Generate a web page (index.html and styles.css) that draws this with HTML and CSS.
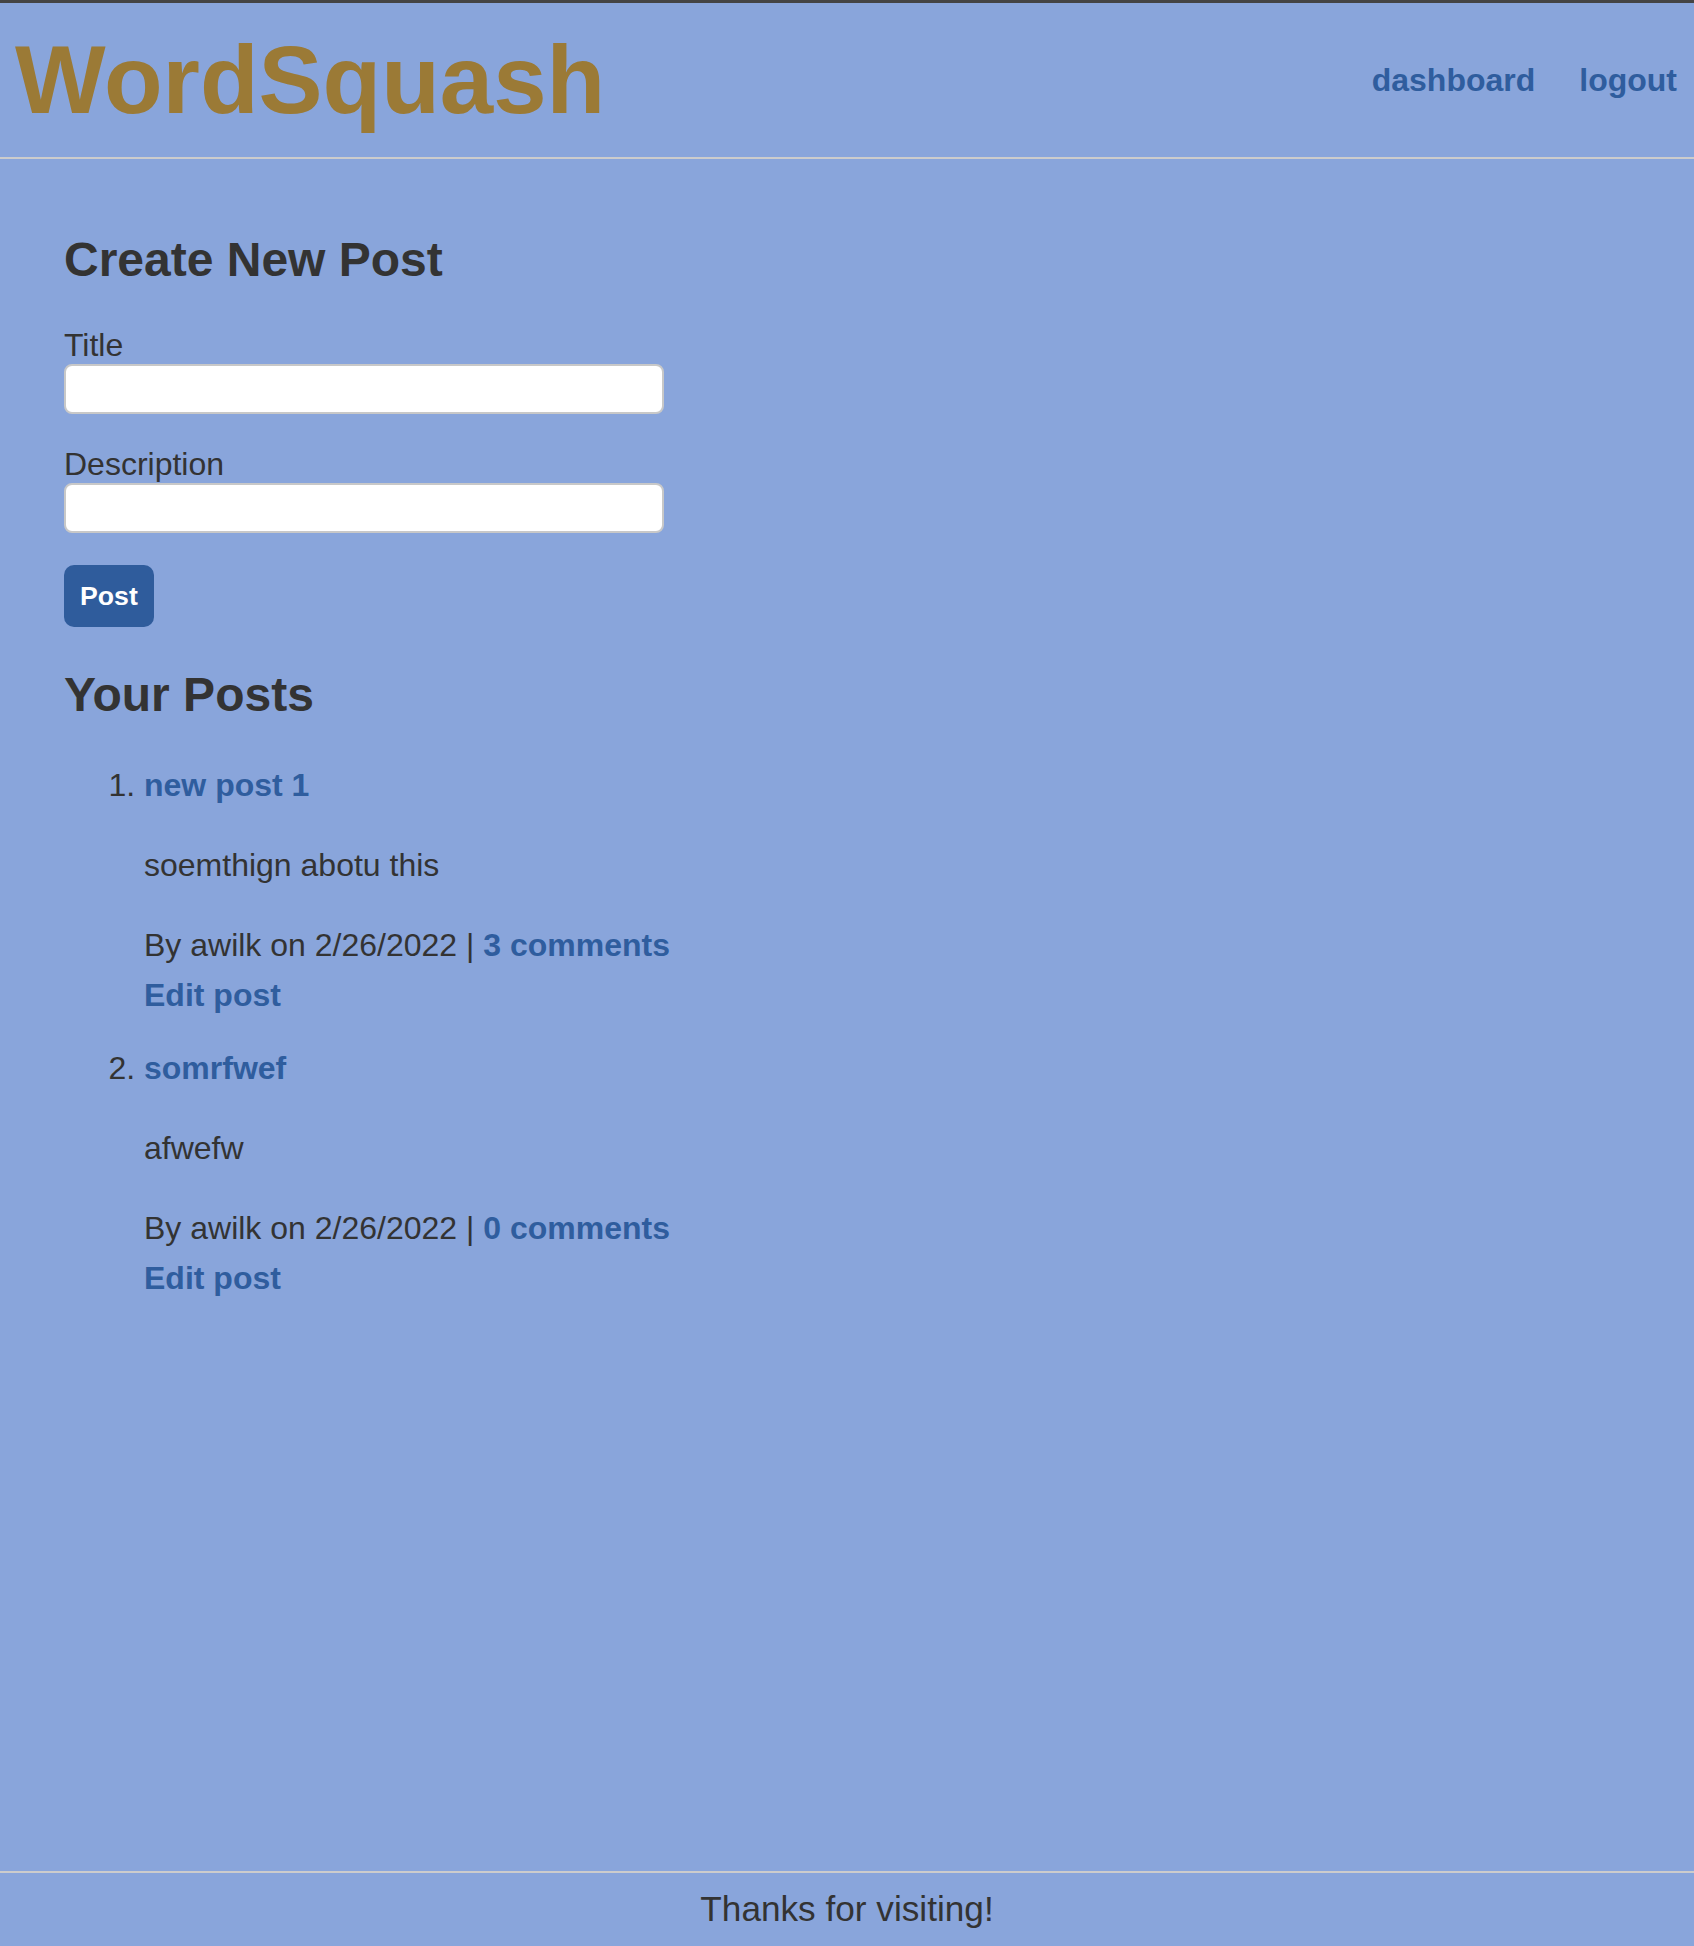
FILE: index.html
```html
<!DOCTYPE html>
<html lang="en">
<head>
<meta charset="utf-8">
<title>WordSquash</title>
<link rel="stylesheet" href="styles.css">
</head>
<body>
<header class="site-header">
  <h1 class="brand">WordSquash</h1>
  <nav class="nav">
    <a class="nav-link" href="#">dashboard</a>
    <a class="nav-link" href="#">logout</a>
  </nav>
</header>
<main class="main">
  <h2 class="section-title">Create New Post</h2>
  <form class="post-form">
    <div class="field">
      <label class="field-label" for="title">Title</label>
      <input class="field-input" id="title" type="text">
    </div>
    <div class="field">
      <label class="field-label" for="desc">Description</label>
      <input class="field-input" id="desc" type="text">
    </div>
    <div class="form-actions">
      <button class="btn" type="button">Post</button>
    </div>
  </form>
  <h2 class="section-title posts-title">Your Posts</h2>
  <ol class="posts">
    <li class="post">
      <a class="post-link" href="#">new post 1</a>
      <p class="post-desc">soemthign abotu this</p>
      <p class="post-meta">By awilk on 2/26/2022 | <a class="post-link" href="#">3 comments</a></p>
      <a class="post-link edit-link" href="#">Edit post</a>
    </li>
    <li class="post">
      <a class="post-link" href="#">somrfwef</a>
      <p class="post-desc">afwefw</p>
      <p class="post-meta">By awilk on 2/26/2022 | <a class="post-link" href="#">0 comments</a></p>
      <a class="post-link edit-link" href="#">Edit post</a>
    </li>
  </ol>
</main>
<footer class="site-footer">Thanks for visiting!</footer>
</body>
</html>
```

FILE: styles.css
```css
* {
  box-sizing: border-box;
}

html, body {
  margin: 0;
  padding: 0;
}

body {
  min-height: 100vh;
  display: flex;
  flex-direction: column;
  background: #89a5db;
  color: #333333;
  font-family: "Liberation Sans", Arial, Helvetica, sans-serif;
  font-size: 32px;
  line-height: 48px;
  border-top: 3px solid #444444;
}

a {
  color: #2f5d9e;
  font-weight: bold;
  text-decoration: none;
}

.site-header {
  height: 156px;
  display: flex;
  justify-content: space-between;
  align-items: center;
  padding: 0 17px 0 15px;
  border-bottom: 2px solid #cccccc;
}

.brand {
  margin: 0;
  font-size: 96px;
  line-height: 144px;
  font-weight: bold;
  color: #9b7a36;
}

.nav {
  display: flex;
  gap: 44px;
  font-size: 32px;
  line-height: 48px;
}

.main {
  flex: 1;
  padding: 65px 64px 0;
}

.section-title {
  margin: 0;
  font-size: 48px;
  line-height: 72px;
  font-weight: bold;
}

.post-form {
  display: flex;
  flex-direction: column;
  gap: 32px;
  margin-top: 31px;
}

.field {
  display: flex;
  flex-direction: column;
}

.field-label {
  display: block;
  line-height: 37px;
}

.field-input {
  width: 600px;
  height: 50px;
  border: 2px solid #c8c8c8;
  border-radius: 8px;
  background: #ffffff;
  font-size: 26px;
  padding: 0 10px;
  font-family: inherit;
}

.form-actions {
  display: flex;
}

.btn {
  background: #2f5c9c;
  color: #ffffff;
  border: none;
  border-radius: 10px;
  font-family: inherit;
  font-size: 26.67px;
  line-height: 30px;
  font-weight: bold;
  padding: 16px 16px;
}

.posts-title {
  margin-top: 32px;
}

.posts {
  margin: 30px 0 0;
  padding: 0 0 0 80px;
}

.post + .post {
  margin-top: 25px;
}

.post-desc,
.post-meta {
  margin: 32px 0 0;
}

.edit-link {
  display: block;
  margin-top: 2px;
}

.site-footer {
  border-top: 2px solid #cccccc;
  text-align: center;
  font-size: 35.2px;
  line-height: 52px;
  padding: 10px 0 11px;
}
```
